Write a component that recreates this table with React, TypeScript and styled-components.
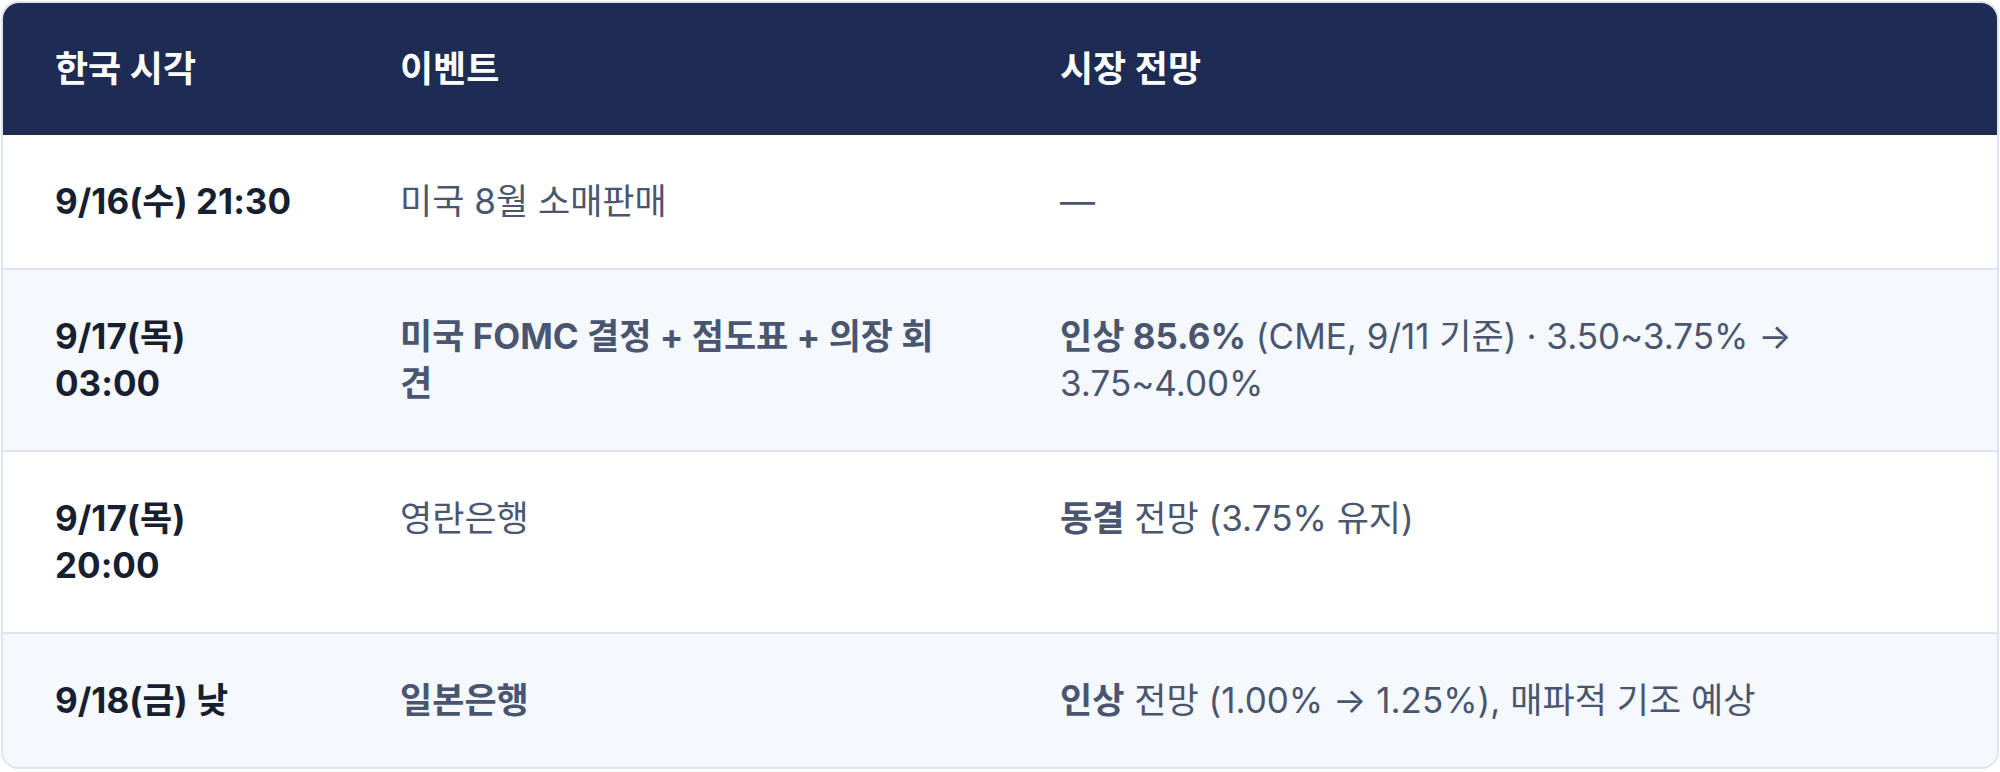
import React from 'react';
import styled, {createGlobalStyle} from 'styled-components';

const $NAVY = '#1e2b53';
const $WHITE = '#ffffff';
const $DARK_TEXT = '#171f30';
const $SLATE = '#4a5670';
const $LINE = '#dfe5f0';
const $ROW_ALT = '#f5f8fd';

const GlobalStyle = createGlobalStyle`
  html, body {
    margin: 0;
    padding: 0;
    background: ${$WHITE};
  }

  body {
    font-family: Inter, "Noto Sans CJK KR", sans-serif;
    -webkit-font-smoothing: antialiased;
  }
`;

const StyledPage = styled.div`
  padding: 1px;
`;

const StyledTable = styled.div`
  border: 2px solid ${$LINE};
  border-radius: 18px;
  overflow: hidden;
  background: ${$WHITE};
`;

const StyledRow = styled.div<{$alt?: boolean; $head?: boolean}>`
  display: grid;
  grid-template-columns: 345px 660px 1fr;
  background: ${({$head, $alt}) => ($head ? $NAVY : $alt ? $ROW_ALT : $WHITE)};
  border-bottom: ${({$head}) => ($head ? 'none' : `2px solid ${$LINE}`)};

  &:last-child {
    border-bottom: none;
  }
`;

const HeadCell = styled.div`
  padding: 42px 52px;
  font-size: 36px;
  line-height: 48px;
  font-weight: 700;
  color: ${$WHITE};
`;

// right padding differs per column so the lines wrap where the design wraps them
const PAD_RIGHT = {time: 50, event: 52, view: 120};

const Cell = styled.div<{$kind: 'time' | 'event' | 'view'; $strong?: boolean}>`
  padding: 43px ${({$kind}) => PAD_RIGHT[$kind]}px 43px 52px;
  font-size: 35px;
  line-height: 47px;
  color: ${({$kind}) => ($kind === 'time' ? $DARK_TEXT : $SLATE)};
  font-weight: ${({$kind, $strong}) => ($kind === 'time' || $strong ? 700 : 400)};

  b {
    font-weight: 700;
  }
`;

interface IEvent {
  time: string;
  event: string;
  strongEvent?: boolean;
  lead?: string;
  view: string;
}

const EVENTS: IEvent[] = [
  {time: '9/16(수) 21:30', event: '미국 8월 소매판매', view: '—'},
  {
    time: '9/17(목) 03:00',
    event: '미국 FOMC 결정 + 점도표 + 의장 회견',
    strongEvent: true,
    lead: '인상 85.6%',
    view: ' (CME, 9/11 기준) · 3.50~3.75% → 3.75~4.00%'
  },
  {time: '9/17(목) 20:00', event: '영란은행', lead: '동결', view: ' 전망 (3.75% 유지)'},
  {
    time: '9/18(금) 낮',
    event: '일본은행',
    strongEvent: true,
    lead: '인상',
    view: ' 전망 (1.00% → 1.25%), 매파적 기조 예상'
  }
];

const App: React.FC = () => (
  <StyledPage>
    <GlobalStyle />
    <StyledTable>
      <StyledRow $head>
        <HeadCell>한국 시각</HeadCell>
        <HeadCell>이벤트</HeadCell>
        <HeadCell>시장 전망</HeadCell>
      </StyledRow>
      {EVENTS.map((item, i) => (
        <StyledRow key={item.time} $alt={i % 2 === 1}>
          <Cell $kind="time">{item.time}</Cell>
          <Cell $kind="event" $strong={item.strongEvent}>{item.event}</Cell>
          <Cell $kind="view">
            {item.lead && <b>{item.lead}</b>}
            {item.view}
          </Cell>
        </StyledRow>
      ))}
    </StyledTable>
  </StyledPage>
);

export default App;
